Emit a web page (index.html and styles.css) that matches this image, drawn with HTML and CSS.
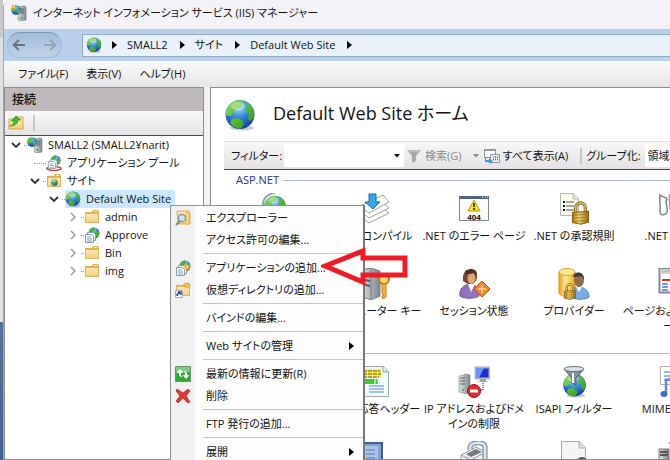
FILE: index.html
```html
<!DOCTYPE html>
<html lang="ja">
<head>
<meta charset="utf-8">
<title>インターネット インフォメーション サービス (IIS) マネージャー</title>
<link rel="stylesheet" href="styles.css">
</head>
<body>
<svg class="defs" aria-hidden="true">
  <defs>
    <radialGradient id="sea" cx=".45" cy=".25" r=".8"><stop offset="0" stop-color="#b5e6fa"/><stop offset=".4" stop-color="#3c8fdc"/><stop offset="1" stop-color="#102d9c"/></radialGradient>
    <linearGradient id="land" x1="0" y1="0" x2="1" y2="1"><stop offset="0" stop-color="#8fe05a"/><stop offset="1" stop-color="#1f9412"/></linearGradient>
    <linearGradient id="fold" x1="0" y1="0" x2="0" y2="1"><stop offset="0" stop-color="#fdeab6"/><stop offset="1" stop-color="#f3cf7c"/></linearGradient>
    <linearGradient id="steel" x1="0" y1="0" x2="1" y2="0"><stop offset="0" stop-color="#e2e5e8"/><stop offset="1" stop-color="#7d858e"/></linearGradient>
    <linearGradient id="brass" x1="0" y1="0" x2="1" y2="0"><stop offset="0" stop-color="#a8781c"/><stop offset=".4" stop-color="#f2d878"/><stop offset="1" stop-color="#946812"/></linearGradient>
    <linearGradient id="gold" x1="0" y1="0" x2="1" y2="0"><stop offset="0" stop-color="#f09c12"/><stop offset=".4" stop-color="#ffe99a"/><stop offset="1" stop-color="#eda81c"/></linearGradient>
  </defs>
  <symbol id="globe" viewBox="0 0 32 32">
    <ellipse cx="18" cy="29" rx="12" ry="2.500" fill="#000" opacity=".2"/>
    <circle cx="16" cy="15.500" r="14.500" fill="url(#sea)"/>
    <path d="M3 10C6 4 11 1 17 1L20 3L17 5L19 7L15 10L12 9L10 13L7 17L3 17L1.500 14ZM20 4L25 5L29 10L30.500 17L27 22L24 20L25 15L21 12L23 8ZM8 20L14 19L19 22L20 26L16 30L10 28L6 24Z" fill="url(#land)"/>
    <ellipse cx="14" cy="7" rx="7" ry="4" fill="#fff" opacity=".35"/>
  </symbol>
  <symbol id="folder" viewBox="0 0 16 16">
    <path d="M1 3h7l1-2h5l1 2v11H1z" fill="#e2ad4d"/><path d="M10 2h3v1h-3z" fill="#fff"/><path d="M1.500 4.500h13v9h-13z" fill="url(#fold)" stroke="#dfb45f"/>
  </symbol>
  <symbol id="server" viewBox="0 0 16 16">
    <path d="M8 2l5-1 2 1v13l-6 1-2-1z" fill="url(#steel)" stroke="#747c84" stroke-width=".6"/><path d="M9 4h4M9 6h4M9 8h4" stroke="#555f68"/><path d="M9 13h2" stroke="#37c72f" stroke-width="2"/>
    <circle cx="5" cy="5" r="4.800" fill="url(#sea)"/><path d="M1 3l4-3 1 3-3 3-2 1zM6 6l3-2v3L7 9z" fill="#4fc531"/>
  </symbol>
  <symbol id="appdoc" viewBox="0 0 16 16">
    <circle cx="10" cy="6" r="5.500" fill="url(#sea)"/><path d="M6 2l4-2 1 3-3 3-3 0zM12 4l3 1v4l-3 1-1-3z" fill="#46b52c"/>
    <path d="M3.500 5.500h6l2 2v6h-8z" fill="#fff" stroke="#8a97a5"/><path d="M1.500 7.500h6l2 2v6h-8z" fill="#fff" stroke="#8a97a5"/><path d="M3 10h4M3 12h5M3 14h5" stroke="#7c9fc2"/>
  </symbol>
  <symbol id="spark" viewBox="0 0 8 8"><path d="M4 0l1 2.500L7.500 1 6 3.500 8 4 6 5l1 2.500L4.500 6 4 8 3 6 .5 7.500 2 5 0 4l2-.8L1 .8 3.200 2z" fill="#f6a21c"/><circle cx="4" cy="4" r="1.200" fill="#ffe38a"/></symbol>
  <symbol id="lock" viewBox="0 0 16 22">
    <path d="M3.500 11V6a4.500 4.500 0 0 1 9 0v5" fill="none" stroke="#7c5a12" stroke-width="3"/><path d="M3.500 11V6a4.500 4.500 0 0 1 9 0v5" fill="none" stroke="#dfc066" stroke-width="1.500"/>
    <path d="M.5 10.500l15-1v10l-7 2-8-1.500z" fill="url(#brass)" stroke="#84600f"/><path d="M1 13l14-1M1 16l14-1M1 19l14-1" stroke="#a37c22"/>
  </symbol>
  <symbol id="chev-down" viewBox="0 0 10 10"><path d="M1 3l4 4 4-4" fill="none" stroke="#333" stroke-width="1.800"/></symbol>
  <symbol id="chev-right" viewBox="0 0 10 10"><path d="M3 1l4 4-4 4" fill="none" stroke="#999" stroke-width="1.500"/></symbol>
  <symbol id="tri" viewBox="0 0 5 8"><path d="M0 0l5 4-5 4z" fill="#000"/></symbol>
  <symbol id="drop" viewBox="0 0 6 4"><path d="M0 0h6L3 3.500z" fill="currentColor"/></symbol>
</svg>

<div class="desktop">
  <div class="backdrop"></div>
  <main class="window">
    <header class="titlebar">
      <svg class="i16" viewBox="0 0 16 16"><use href="#server"/><use href="#spark" x="0" y="-1" width="6" height="6"/></svg>
      <span>インターネット インフォメーション サービス (IIS) マネージャー</span>
    </header>

    <nav class="navbar" aria-label="場所">
      <div class="history">
        <button aria-label="戻る"><svg viewBox="0 0 14 12"><path d="M13 6H2M7 1L1.500 6 7 11" fill="none" stroke="#65727f" stroke-width="1.800"/></svg></button>
        <button aria-label="進む"><svg viewBox="0 0 14 12"><path d="M1 6h11M7 1l5.500 5L7 11" fill="none" stroke="#96a3b0" stroke-width="1.800"/></svg></button>
      </div>
      <div class="address">
        <svg class="i16"><use href="#globe"/></svg>
        <svg class="tri"><use href="#tri"/></svg>
        <a href="#server-node">SMALL2</a>
        <svg class="tri"><use href="#tri"/></svg>
        <a href="#sites-node">サイト</a>
        <svg class="tri"><use href="#tri"/></svg>
        <a href="#site-node">Default Web Site</a>
        <svg class="tri"><use href="#tri"/></svg>
      </div>
    </nav>

    <div class="menubar">
      <button>ファイル(F)</button>
      <button>表示(V)</button>
      <button>ヘルプ(H)</button>
    </div>

    <div class="workspace">
      <aside class="connections">
        <h2>接続</h2>
        <div class="tools">
          <button aria-label="上へ"><svg class="i16" viewBox="0 0 16 16"><path d="M1 4h6l1-2h7v12H1z" fill="url(#fold)" stroke="#d8a443"/><path d="M2 11c3-1 4-3 4-5H3l5-5 5 4h-3c0 3-3 6-8 6z" fill="#42b933" stroke="#238a1c" stroke-width=".6"/></svg></button>
          <i class="bar"></i>
        </div>
        <ul class="tree">
          <li>
            <div class="node"><button aria-label="折りたたむ"><svg><use href="#chev-down"/></svg></button><i class="dots"></i>
              <a href="#server-node" id="server-node"><svg class="i16"><use href="#server"/></svg><span>SMALL2 (SMALL2¥narit)</span></a></div>
            <ul>
              <li><div class="node leaf"><i class="dots"></i>
                <a href="#pools"><svg class="i16" viewBox="0 0 16 16"><path d="M1 13c3-2 11-2 14 0v1c-3 2-11 2-14 0z" fill="#fff" stroke="#c83b31" stroke-width="1.500"/><use href="#appdoc" x="1" y="0" width="14" height="14"/></svg><span>アプリケーション プール</span></a></div></li>
              <li>
                <div class="node"><button aria-label="折りたたむ"><svg><use href="#chev-down"/></svg></button><i class="dots"></i>
                  <a href="#sites-node" id="sites-node"><svg class="i16" viewBox="0 0 16 16"><use href="#folder"/><use href="#globe" x="5" y="6" width="7" height="7"/></svg><span>サイト</span></a></div>
                <ul>
                  <li>
                    <div class="node"><button aria-label="折りたたむ"><svg><use href="#chev-down"/></svg></button><i class="dots"></i>
                      <a class="selected" href="#site-node" id="site-node"><svg class="i16"><use href="#globe"/></svg><span>Default Web Site</span></a></div>
                    <ul>
                      <li><div class="node"><button aria-label="展開"><svg><use href="#chev-right"/></svg></button><i class="dots"></i><a href="#admin"><svg class="i16"><use href="#folder"/></svg><span>admin</span></a></div></li>
                      <li><div class="node"><button aria-label="展開"><svg><use href="#chev-right"/></svg></button><i class="dots"></i><a href="#approve"><svg class="i16"><use href="#appdoc"/></svg><span>Approve</span></a></div></li>
                      <li><div class="node"><button aria-label="展開"><svg><use href="#chev-right"/></svg></button><i class="dots"></i><a href="#bin"><svg class="i16"><use href="#folder"/></svg><span>Bin</span></a></div></li>
                      <li><div class="node"><button aria-label="展開"><svg><use href="#chev-right"/></svg></button><i class="dots"></i><a href="#img"><svg class="i16"><use href="#folder"/></svg><span>img</span></a></div></li>
                    </ul>
                  </li>
                </ul>
              </li>
            </ul>
          </li>
        </ul>
      </aside>

      <section class="home">
        <div class="heading">
          <svg class="i32"><use href="#globe"/></svg>
          <h1>Default Web Site ホーム</h1>
        </div>
        <div class="filterbar">
          <label for="filter">フィルター:</label>
          <div class="combo"><input id="filter" type="text"><svg class="drop"><use href="#drop"/></svg></div>
          <button class="search" disabled>
            <svg class="i16" viewBox="0 0 16 16"><path d="M1 2h14l-5 6v5l-4 2V8z" fill="#a9a9a9"/><path d="M3 3h10" stroke="#d5d5d5"/></svg>
            <span>検索(G)</span><svg class="drop"><use href="#drop"/></svg>
          </button>
          <button class="showall">
            <svg class="i16" viewBox="0 0 16 16"><path d="M.5 1.500h11v8H.5z" fill="#fff" stroke="#8a949e"/><path d="M0 1h12v2H0z" fill="#8b98a6"/><path d="M6.500 6.500h9v8h-9z" fill="#eef3fa" stroke="#8a949e"/><path d="M9 9h1M11 9h1M13 9h1M9 11.500h1M11 11.500h1M13 11.500h1" stroke="#3e64b8" stroke-width="1.300"/><path d="M2 9v3h3V10l4 3-4 3v-2H1V9z" fill="#25a3e2"/></svg>
            <span>すべて表示(A)</span>
          </button>
          <i class="bar"></i>
          <label for="group">グループ化:</label>
          <select id="group"><option>領域</option></select>
        </div>

        <div class="features">
          <h3><span>ASP.NET</span></h3>
          <div class="grid">
            <a href="#f1"><svg class="i32" viewBox="0 0 32 32"><path d="M5 14C4 6 9 1 17 0" fill="none" stroke="#9aa4ac" stroke-width="2"/><use href="#globe" x="5" y="2" width="24" height="24"/></svg></a>
            <a href="#f2"><svg class="i32" viewBox="0 0 32 32"><g fill="#fff" stroke="#9ca0a3"><path d="M2 23l9 7 20-10-7-6z"/><path d="M2 18l9 7 20-10-7-6z"/><path d="M2 13l9 7 20-11-6-7z"/></g><path d="M11 1h7v8h4l-7 7-8-7h4z" fill="#36a6e9" stroke="#1b6db2"/></svg><span>.NET コンパイル</span></a>
            <a href="#f3"><svg class="i32" viewBox="0 0 32 32"><path d="M1.500 3.500h29v24h-29z" fill="#fbfbfb" stroke="#7d8794"/><path d="M1 3h30v3H1z" fill="#51667e"/><path d="M24 4h1M27 4h1M29 4h1" stroke="#fff"/><path d="M16 7l6 11H10z" fill="#ffe51c" stroke="#c19b00" stroke-linejoin="round"/><path d="M16 10v4M16 15v2" stroke="#111" stroke-width="1.500"/><text x="16" y="27" text-anchor="middle" class="code">404</text></svg><span>.NET のエラー ページ</span></a>
            <a href="#f4"><svg class="i32" viewBox="0 0 32 32"><path d="M2.500.5h13l5 5v17h-18z" fill="#fdfdec" stroke="#b5b8ac"/><path d="M15 0v6h6" fill="#e5e5dc" stroke="#b5b8ac"/><path d="M8 9h8M8 13h8M8 17h8" stroke="#555"/><path d="M5 9h2M5 13h2M5 17h2" stroke="#111" stroke-width="2"/><use href="#lock" x="14" y="8" width="17" height="24"/></svg><span>.NET の承認規則</span></a>
            <a href="#f5"><svg class="i32" viewBox="0 0 32 32"><path d="M2 2c4 3 6 2 7 4-3 5 2 8 0 13-2 4-7 4-7-1 1-5-1-10 0-16z" fill="#fff" stroke="#78828b" stroke-width="1.500"/><path d="M11 2l5-2 10 3v15l-8 5-6-6z" fill="#b7d3e8" stroke="#7791a4"/></svg><span>.NET の役割</span></a>

            <a href="#f6"></a>
            <a href="#f7"><svg class="i32" viewBox="0 0 32 32"><path d="M2 2l11-2 9 3v25l-9 4-11-4z" fill="url(#steel)" stroke="#777e84"/><path d="M13 1v30" stroke="#737c84"/><path d="M3 6l9 2M3 11l9 2M3 16l9 2" stroke="#4d5964" stroke-width="2"/><path d="M4 27h3" stroke="#40cf25" stroke-width="3"/><circle cx="26" cy="11" r="5" fill="#ffd56b" stroke="#c8790f" stroke-width="2"/><path d="M24 16h4v13l-3 2-1-3 2-1-2-2z" fill="#f5b33b" stroke="#c8790f"/><circle cx="26" cy="9" r="1.500" fill="#fff"/></svg><span>コンピューター キー</span></a>
            <a href="#f8"><svg class="i32" viewBox="0 0 32 32"><path d="M5 13C4 5 8 1 13 1s8 4 5 12l-5 5z" fill="#73482f"/><path d="M2 28c-1-7 3-11 10-12 7 1 9 5 9 12-5 3-15 3-19 0z" fill="#9372bd" stroke="#76549f"/><path d="M10 16l3 8 4-8z" fill="#fff"/><ellipse cx="13.500" cy="10" rx="4" ry="6" fill="#dda476"/><path d="M8 6c4 1 5-1 8-1l2 3V3l-5-2-6 2z" fill="#4f2d20"/><path d="M24 13l8 8-8 8-8-8z" fill="#f08a2b" stroke="#bb4b0c"/><path d="M20 21h8M24 17v8" stroke="#fbd6a5" stroke-width="1.500"/></svg><span>セッション状態</span></a>
            <a href="#f9"><svg class="i32" viewBox="0 0 32 32"><path d="M1 4v21c3 5 13 5 16 0V4z" fill="url(#gold)" stroke="#e09612"/><ellipse cx="9" cy="4" rx="8" ry="3.500" fill="#ffe89a" stroke="#e4a32b"/><path d="M13 29c0-6 3-10 8-10s10 4 10 10c-4 3-14 3-18 0z" fill="#7aaee2" stroke="#4b7fbf"/><path d="M18 19l3 5 3-5z" fill="#fff"/><ellipse cx="21" cy="12" rx="5" ry="7" fill="#96684c"/><path d="M15 9c1-7 12-6 11 3l-2-4z" fill="#343638"/><use href="#lock" x="6" y="15" width="12" height="17"/></svg><span>プロバイダー</span></a>
            <a href="#f10"><svg class="i32" viewBox="0 0 32 32"><path d="M1.500.5h29v24h-29z" fill="#fff" stroke="#7e8792" stroke-width="2"/><path d="M2 1h28v5H2z" fill="#d2d3cf"/><path d="M4 3h20" stroke="#777" stroke-dasharray="1 2"/><path d="M4 12h8" stroke="#e22c26" stroke-width="2"/><path d="M4 16h6M4 19h6M4 22h6M12 11h10M14 12v11" stroke="#4777cf" stroke-width="1.500"/></svg><span>ページおよびコントロ<br>ール</span></a>
          </div>

          <h3 class="rule"></h3>
          <div class="grid">
            <a href="#g1"></a>
            <a href="#g2"><svg class="i32" viewBox="0 0 32 32"><path d="M1.500.5h24l5 5v25h-29z" fill="#f4f9fc" stroke="#9ba7af"/><path d="M3 3h20v9H3z" fill="#ffee45"/><path d="M5 5h17M5 8h18M5 11h16" stroke="#58551e" stroke-dasharray="4 1"/><path d="M3 13h17v5H3z" fill="#39ca2c"/><path d="M17 13v5M20 13v5" stroke="#fff"/><path d="M25 0v6h6" fill="#dde5ea" stroke="#9ba7af"/><path d="M11 20h15M11 23h15M11 26h15" stroke="#4d8ccb"/></svg><span>HTTP 応答ヘッダー</span></a>
            <a href="#g3"><svg class="i32" viewBox="0 0 32 32"><path d="M1 10l7-2 4 1v16l-4 3-7-2z" fill="url(#steel)" stroke="#7d858b" stroke-width=".6"/><path d="M2 12h5M2 15h5M2 18h5" stroke="#59636b"/><path d="M4 24h2" stroke="#38c42e" stroke-width="2"/><path d="M17.500 1.500h14v11h-14z" fill="#192fd4" stroke="#b1b5b6" stroke-width="2"/><path d="M18 2l8 0-5 10h-3z" fill="#6f90ff"/><path d="M22 13h6v2l3 1H19l3-1z" fill="#9ba1a5"/><path d="M25 17v7h-5" fill="none" stroke="#111" stroke-dasharray="1 1"/><circle cx="16" cy="25" r="6.500" fill="#d72e32" stroke="#9c1519"/><path d="M12 25h8" stroke="#fff" stroke-width="3"/></svg><span>IP アドレスおよびドメ<br>インの制限</span></a>
            <a href="#g4"><svg class="i32" viewBox="0 0 32 32"><use href="#globe" x="4" y="7" width="25" height="25"/><path d="M6 3l8 9v5l4 2v-7l8-9z" fill="#82919f" stroke="#4b5964"/><ellipse cx="16" cy="3" rx="10" ry="2.500" fill="#dbe5ea" stroke="#647480"/><path d="M15 7v10" fill="none" stroke="#fff" stroke-width="2"/></svg><span>ISAPI フィルター</span></a>
            <a href="#g5"><svg class="i32" viewBox="0 0 32 32"><path d="M2.500.5h20v18h-20z" fill="#fbfbfb" stroke="#aeb2b4"/><path d="M6 6h12M6 10h12M6 14h9" stroke="#3975ba"/><path d="M8 27V14l12-2v13" fill="none" stroke="#5b8fd5" stroke-width="2.500"/><ellipse cx="6" cy="28" rx="3.500" ry="3" fill="#3e70be"/><ellipse cx="17" cy="26" rx="4" ry="3" fill="#3e70be"/></svg><span>MIME の種類</span></a>

            <a href="#h1"></a>
            <a href="#h2"><svg class="i32" viewBox="0 0 32 32"><path d="M2 2h22v28H2z" fill="#7fa2ce" stroke="#405f8f" stroke-width="2"/><path d="M5 5h15v22H5z" fill="#a7c4e5"/><path d="M8 9h9M8 13h9M8 17h9" stroke="#557bb0"/></svg></a>
            <a href="#h3"><svg class="i32" viewBox="0 0 32 32"><path d="M3 14l15-8 10 5v16L12 32 3 26z" fill="#eee" stroke="#999"/><path d="M3 14l10 5 15-8" fill="none" stroke="#999"/><path d="M8 13l10-5 6 3-11 5z" fill="#757d82"/><path d="M12 9V6c1-5 15-6 15 0v26" fill="none" stroke="#6c7d90" stroke-width="5"/><path d="M12 9V6c1-5 15-6 15 0v26" fill="none" stroke="#d8e5ef" stroke-width="3"/></svg></a>
            <a href="#h4"><svg class="i32" viewBox="0 0 32 32"><path d="M3.500.5h18l6 6v25h-24z" fill="#f4f4f4" stroke="#aaa"/><path d="M21 0v7h7" fill="#ddd" stroke="#aaa"/><circle cx="24" cy="22" r="5" fill="#ddd" stroke="#555" stroke-width="2"/></svg></a>
            <a href="#h5"><svg class="i32" viewBox="0 0 32 32"><path d="M1 8h10v24H1z" fill="url(#steel)" stroke="#777"/><path d="M2 11h8M2 14h8" stroke="#555" stroke-width="2"/><path d="M11 2h15v20" fill="none" stroke="#333" stroke-dasharray="2 1"/></svg></a>
          </div>
        </div>
      </section>
    </div>
  </main>

  <div class="context" role="menu">
    <button role="menuitem"><svg class="i16" viewBox="0 0 16 16"><path d="M2 1h11l2 2v11H3z" fill="url(#fold)" stroke="#dba94c"/><path d="M11 2l3-1v13l-3 1z" fill="#f6d685" stroke="#dba94c" stroke-width=".6"/><circle cx="7" cy="8" r="3.500" fill="#cce7f8" stroke="#8297aa" stroke-width="1.300"/><path d="M5 11l-4 4" stroke="#7a8590" stroke-width="2"/></svg><span>エクスプローラー</span></button>
    <button role="menuitem"><i class="i16"></i><span>アクセス許可の編集...</span></button>
    <hr>
    <button role="menuitem"><svg class="i16" viewBox="0 0 16 16"><use href="#appdoc"/><use href="#spark" x="8" y="3" width="8" height="8"/></svg><span>アプリケーションの追加...</span></button>
    <button role="menuitem"><svg class="i16" viewBox="0 0 16 16"><use href="#folder"/><path d="M.5 8.500h7v7h-7z" fill="#fff" stroke="#aaa"/><path d="M2 14c0-2 1-3 3-3M3 10h3v3" fill="none" stroke="#1d3fb5" stroke-width="1.500"/><use href="#spark" x="9" y="0" width="7" height="7"/></svg><span>仮想ディレクトリの追加...</span></button>
    <hr>
    <button role="menuitem"><i class="i16"></i><span>バインドの編集...</span></button>
    <hr>
    <button role="menuitem"><i class="i16"></i><span>Web サイトの管理</span><svg class="tri"><use href="#tri"/></svg></button>
    <hr>
    <button role="menuitem"><svg class="i16" viewBox="0 0 16 16"><path d="M.5.5h15v15H.5z" fill="#2faa35" stroke="#64966a"/><path d="M1 1h14v5H1z" fill="#7fc987"/><path d="M5 3l3.500 4H6c0 2 0 3 1.500 4H6C4 10 4 9 4 7H1.500zM11 13L7.500 9H10c0-2 0-3-1.500-4H10c2 1 2 2 2 4h2.500z" fill="#fff"/></svg><span>最新の情報に更新(R)</span></button>
    <button role="menuitem"><svg class="i16" viewBox="0 0 16 16"><path d="M2 1l6 4 5-4 2 2-4 5 4 6-2 1-5-5-5 5-2-2 4-5-4-5z" fill="#e03531" stroke="#b5211e" stroke-width=".7"/></svg><span>削除</span></button>
    <hr>
    <button role="menuitem"><i class="i16"></i><span>FTP 発行の追加...</span></button>
    <hr>
    <button role="menuitem"><i class="i16"></i><span>展開</span><svg class="tri"><use href="#tri"/></svg></button>
  </div>

  <svg class="pointer" viewBox="0 0 88 38" aria-hidden="true"><path d="M4 19L42 4v7h42v17H42v7z" fill="none" stroke="#ed1c24" stroke-width="5"/></svg>
</div>
</body>
</html>
```

FILE: styles.css
```css
* { box-sizing: border-box; }
body {
  margin: 0;
  font: 11px/18px "Open Sans", "Noto Sans CJK JP", sans-serif;
  font-feature-settings: "palt";
  color: #111;
}
button, input, select { font: inherit; font-feature-settings: inherit; color: inherit; border: 0; padding: 0; background: none; }
a { color: inherit; text-decoration: none; }
ul { list-style: none; margin: 0; padding: 0; }
h1, h2, h3 { margin: 0; font-weight: 400; }
svg { display: block; flex: none; }
.defs { position: absolute; width: 0; height: 0; }
.i16 { width: 16px; height: 16px; flex: none; }
.i32 { width: 32px; height: 32px; }
.tri { width: 5px; height: 8px; }
.drop { width: 6px; height: 4px; }
.bar { width: 2px; height: 16px; background: #c6c8b8; flex: none; }

.desktop { position: relative; display: flex; height: 100vh; overflow: hidden; }
.backdrop { width: 3px; background: linear-gradient(#c8c8c8 0 8%, #e1e1e1 8% 70%, #53749c 70%, #3d6595); }
.window {
  flex: 1;
  min-width: 0;
  display: flex;
  flex-direction: column;
  background: #f2f1f3;
  border-left: 1px solid #a5a5aa;
  border-top-left-radius: 8px;
  overflow: hidden;
}

.titlebar { display: flex; align-items: center; gap: 6px; height: 29px; padding: 0 7px 3px; background: #f3f2f7; }
.navbar { display: flex; align-items: center; gap: 20px; height: 32px; padding-left: 3px; background: #b8d0eb; }
.history {
  display: flex;
  align-items: center;
  justify-content: space-between;
  width: 55px;
  height: 26px;
  padding: 0 4px;
  border: 1px solid #a1bad8;
  border-top-color: #7e96b4;
  border-radius: 13px;
  background: linear-gradient(#a2bcdb, #bfd4eb);
}
.history svg { width: 14px; height: 12px; }
.address {
  flex: 1;
  display: flex;
  align-items: center;
  gap: 10px;
  height: 23px;
  padding-left: 3px;
  border: 1px solid #92a9ca;
  border-right: 0;
  background: #e9f1fa;
}
.address a { margin-right: 2px; }
.menubar { display: flex; gap: 18px; height: 26px; padding-left: 14px; background: linear-gradient(#fafafa, #e7e5e7); }

.workspace { flex: 1; display: flex; gap: 6px; min-height: 0; }
.connections { width: 200px; flex: none; border: 1px solid #8d8b91; background: #fff; }
.connections h2 { height: 23px; padding-left: 7px; font-size: 12px; line-height: 23px; font-weight: 500; background: #bdb9bc; }
.tools { display: flex; align-items: center; gap: 9px; height: 25px; padding-left: 3px; border-bottom: 1px solid #4a4668; background: linear-gradient(#fafafa, #e5e3e5); }
.tree ul { padding-left: 19px; }
.node { display: flex; align-items: center; height: 18px; padding-left: 6px; white-space: nowrap; }
.node button { width: 10px; height: 10px; }
.node button svg { width: 10px; height: 10px; }
.dots { width: 6px; height: 1px; border-top: 1px dotted #999; }
.node button + .dots { width: 3px; margin-left: 3px; }
.leaf .dots { width: 12px; margin-left: 4px; }
.node a { display: flex; align-items: center; gap: 5px; height: 18px; padding-right: 4px; }
.selected { background: #cce8ff; }

.home { flex: 1; min-width: 0; border: 1px solid #8d8b91; border-right: 0; padding-left: 13px; background: #fff; overflow: hidden; }
.heading { display: flex; align-items: center; gap: 17px; height: 53px; }
.heading h1 { font-size: 18px; line-height: 28px; padding-bottom: 4px; }
.filterbar {
  display: flex;
  align-items: center;
  height: 29px;
  padding-left: 7px;
  white-space: nowrap;
  border-top: 1px solid #ddd;
  border-bottom: 1px solid #44406a;
  background: linear-gradient(#f8f8f8, #e4e2e4);
}
.combo { display: flex; align-items: center; width: 120px; height: 23px; margin-left: 2px; padding-right: 4px; background: #fff; }
.combo input { flex: 1; min-width: 0; height: 23px; outline: 0; }
.filterbar button { display: flex; align-items: center; gap: 3px; }
.search { margin-left: 2px; color: #8a8a8a; }
.search .drop { margin-left: 8px; }
.showall { margin: 0 12px 0 5px; }
.filterbar .bar + label { margin: 0 4px; }
.filterbar select { width: 90px; height: 23px; padding-left: 3px; appearance: none; background: #fff; flex: none; }

.features { overflow: hidden; }
.features h3 { display: flex; align-items: center; gap: 5px; height: 20px; padding-left: 12px; font-size: 11px; color: #1e3287; }
.features h3::after { content: ""; flex: 1; height: 1px; background: #aab8d8; }
.grid { display: grid; grid-template-columns: repeat(5, 100px); grid-auto-rows: 75px; margin: 3px 0 0; }
.grid a { display: flex; flex-direction: column; align-items: center; text-align: center; line-height: 15px; white-space: nowrap; }
.grid span { margin-top: 3px; }
.code { font: bold 8px "Liberation Sans", sans-serif; }

.context {
  position: absolute;
  left: 170px;
  top: 205px;
  width: 195px;
  padding-top: 1px;
  border: 1px solid #8f8f8f;
  border-right: 2px solid #777;
  background: linear-gradient(90deg, #f1f1f1 24px, #fdfdfd 24px);
}
.context button { display: flex; align-items: center; gap: 15px; width: 100%; height: 22px; padding: 0 9px 0 4px; white-space: nowrap; text-align: left; }
.context span { flex: 1; }
.context hr { height: 1px; margin: 2px 0 3px 32px; border: 0; background: #c5c5b6; }
.pointer { position: absolute; left: 321px; top: 247px; width: 88px; height: 38px; }
```
